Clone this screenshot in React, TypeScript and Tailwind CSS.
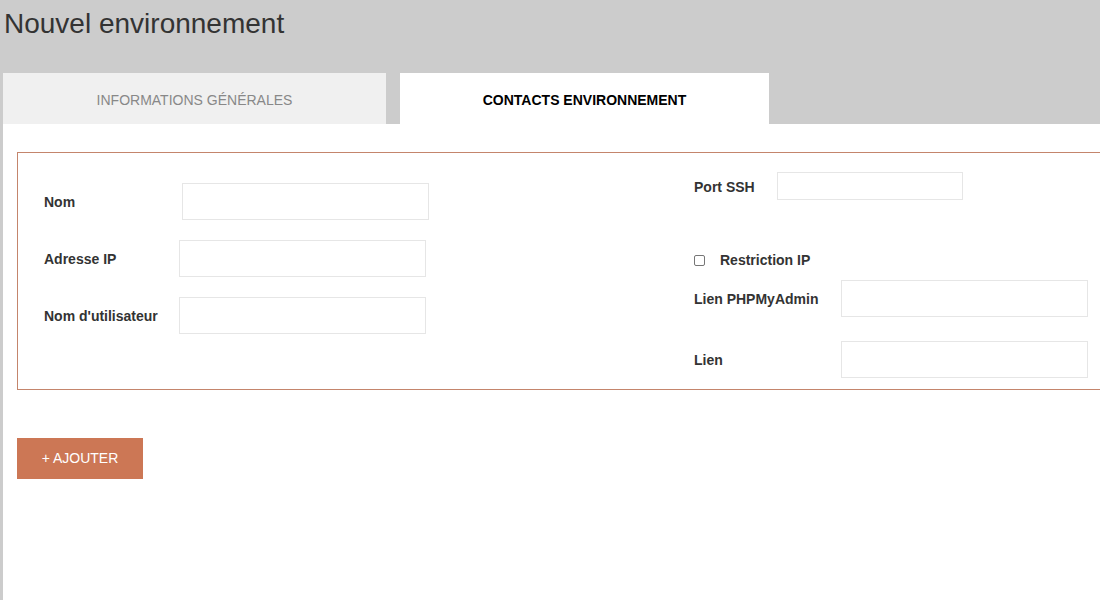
import React, { useState } from "react";

const Field = ({
  label,
  labelWidth,
  inputWidth = "w-[247px]",
  inputHeight = "h-[37px]",
  className = "",
}: {
  label: string;
  labelWidth: string;
  inputWidth?: string;
  inputHeight?: string;
  className?: string;
}) => (
  <div className={`flex items-center ${className}`}>
    <label className={`${labelWidth} shrink-0 pt-[2px] text-[14px] font-bold text-[#333]`}>
      {label}
    </label>
    <input
      type="text"
      className={`${inputWidth} ${inputHeight} border border-[#e6e6e6] bg-white outline-none px-2 text-[13px]`}
    />
  </div>
);

const App = () => {
  const [tab, setTab] = useState(1);
  const [restricted, setRestricted] = useState(false);

  return (
    <div
      className="w-[1100px] h-[600px] overflow-hidden bg-[#cccccc] pl-[3px]"
      style={{ fontFamily: '"Liberation Sans", Arial, sans-serif' }}
    >
      <h1 className="ml-[1px] pt-[7px] h-[73px] text-[28px] leading-[34px] font-normal text-[#333]">
        Nouvel environnement
      </h1>

      {/* tabs */}
      <div className="flex h-[51px]">
        <button
          onClick={() => setTab(0)}
          className={`w-[383px] pt-[3px] text-[14px] uppercase ${
            tab === 0 ? "bg-white font-bold text-black" : "bg-[#f0f0f0] text-[#888]"
          }`}
        >
          Informations générales
        </button>
        <button
          onClick={() => setTab(1)}
          className={`ml-[14px] w-[369px] pt-[3px] text-[14px] uppercase ${
            tab === 1 ? "bg-white font-bold text-black" : "bg-[#f0f0f0] text-[#888]"
          }`}
        >
          Contacts environnement
        </button>
      </div>

      {/* panel */}
      <div className="bg-white h-[476px] pl-[14px] pt-[28px]">
        <div className="w-[1100px] h-[238px] border border-[#c4856c] flex pl-[26px]">
          <div className="w-[650px] pt-[30px] flex flex-col">
            <Field label="Nom" labelWidth="w-[138px]" />
            <Field label="Adresse IP" labelWidth="w-[135px]" className="mt-[20px]" />
            <Field label="Nom d'utilisateur" labelWidth="w-[135px]" className="mt-[20px]" />
          </div>
          <div className="pt-[19px] flex flex-col">
            <Field
              label="Port SSH"
              labelWidth="w-[83px]"
              inputWidth="w-[186px]"
              inputHeight="h-[28px]"
            />
            <label className="mt-[54px] flex items-center h-[12px] cursor-pointer">
              <span
                onClick={() => setRestricted(!restricted)}
                className={`w-[11px] h-[11px] border border-[#767676] rounded-[2px] ${
                  restricted ? "bg-[#0075ff] border-[#0075ff]" : "bg-white"
                }`}
              />
              <span className="ml-[15px] pt-[1px] text-[14px] font-bold text-[#333]">
                Restriction IP
              </span>
            </label>
            <Field label="Lien PHPMyAdmin" labelWidth="w-[147px]" className="mt-[14px]" />
            <Field label="Lien" labelWidth="w-[147px]" className="mt-[24px]" />
          </div>
        </div>

        <button className="mt-[48px] w-[126px] h-[41px] bg-[#cc7755] text-white text-[14px]">
          + AJOUTER
        </button>
      </div>
    </div>
  );
};

export default App;
